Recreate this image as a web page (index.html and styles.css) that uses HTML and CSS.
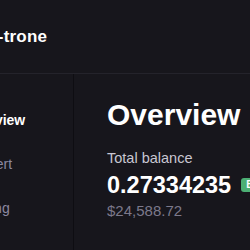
FILE: index.html
```html
<!DOCTYPE html>
<html>
<head>
<meta charset="utf-8">
<link rel="stylesheet" href="styles.css">
</head>
<body>
<div class="app">
  <header class="topbar">
    <div class="logo">Elec-trone</div>
  </header>
  <div class="body">
    <nav class="sidebar">
      <a class="nav-item active">Overview</a>
      <a class="nav-item">Convert</a>
      <a class="nav-item">Staking</a>
    </nav>
    <main class="main">
      <h1 class="title">Overview</h1>
      <div class="label">Total balance</div>
      <div class="balance-row">
        <span class="balance">0.27334235</span>
        <span class="badge">BTC</span>
      </div>
      <div class="fiat">$24,588.72</div>
    </main>
  </div>
</div>
</body>
</html>
```
FILE: styles.css
```css
html, body {
  margin: 0;
  padding: 0;
  background: #17161c;
  overflow: hidden;
}
body {
  font-family: "Liberation Sans", Arial, sans-serif;
  color: #ffffff;
  width: 250px;
  height: 250px;
}
.app {
  margin-left: -120px;
  width: 420px;
}
.topbar {
  height: 73px;
  border-bottom: 1px solid #24232b;
  box-sizing: content-box;
  display: flex;
  align-items: center;
  padding-left: 82px;
}
.logo {
  font-weight: 700;
  font-size: 17px;
  letter-spacing: 0.2px;
}
.body {
  display: flex;
}
.sidebar {
  width: 194px;
  border-right: 1px solid #0e0d12;
  height: 200px;
  display: flex;
  flex-direction: column;
  padding-top: 38px;
  padding-left: 83px;
  box-sizing: border-box;
  gap: 28px;
}
.nav-item {
  font-size: 14px;
  line-height: 16px;
  color: #8c88a0;
}
.nav-item.active {
  color: #ffffff;
  font-weight: 700;
}
.main {
  padding-left: 33px;
  padding-top: 23px;
}
.title {
  margin: 0;
  font-size: 30px;
  line-height: 36px;
  font-weight: 700;
}
.label {
  margin-top: 16px;
  font-size: 14.5px;
  line-height: 18px;
  color: #c9c7d2;
}
.balance-row {
  display: flex;
  align-items: center;
  gap: 10px;
  margin-top: 4px;
}
.balance {
  font-size: 23.5px;
  line-height: 28px;
  font-weight: 700;
}
.badge {
  background: #4caf74;
  border-radius: 3px;
  font-size: 10px;
  line-height: 14px;
  padding: 0 5px;
  color: #fff;
  font-weight: 700;
}
.fiat {
  margin-top: 3px;
  font-size: 15px;
  line-height: 18px;
  color: #7c798b;
}
```
